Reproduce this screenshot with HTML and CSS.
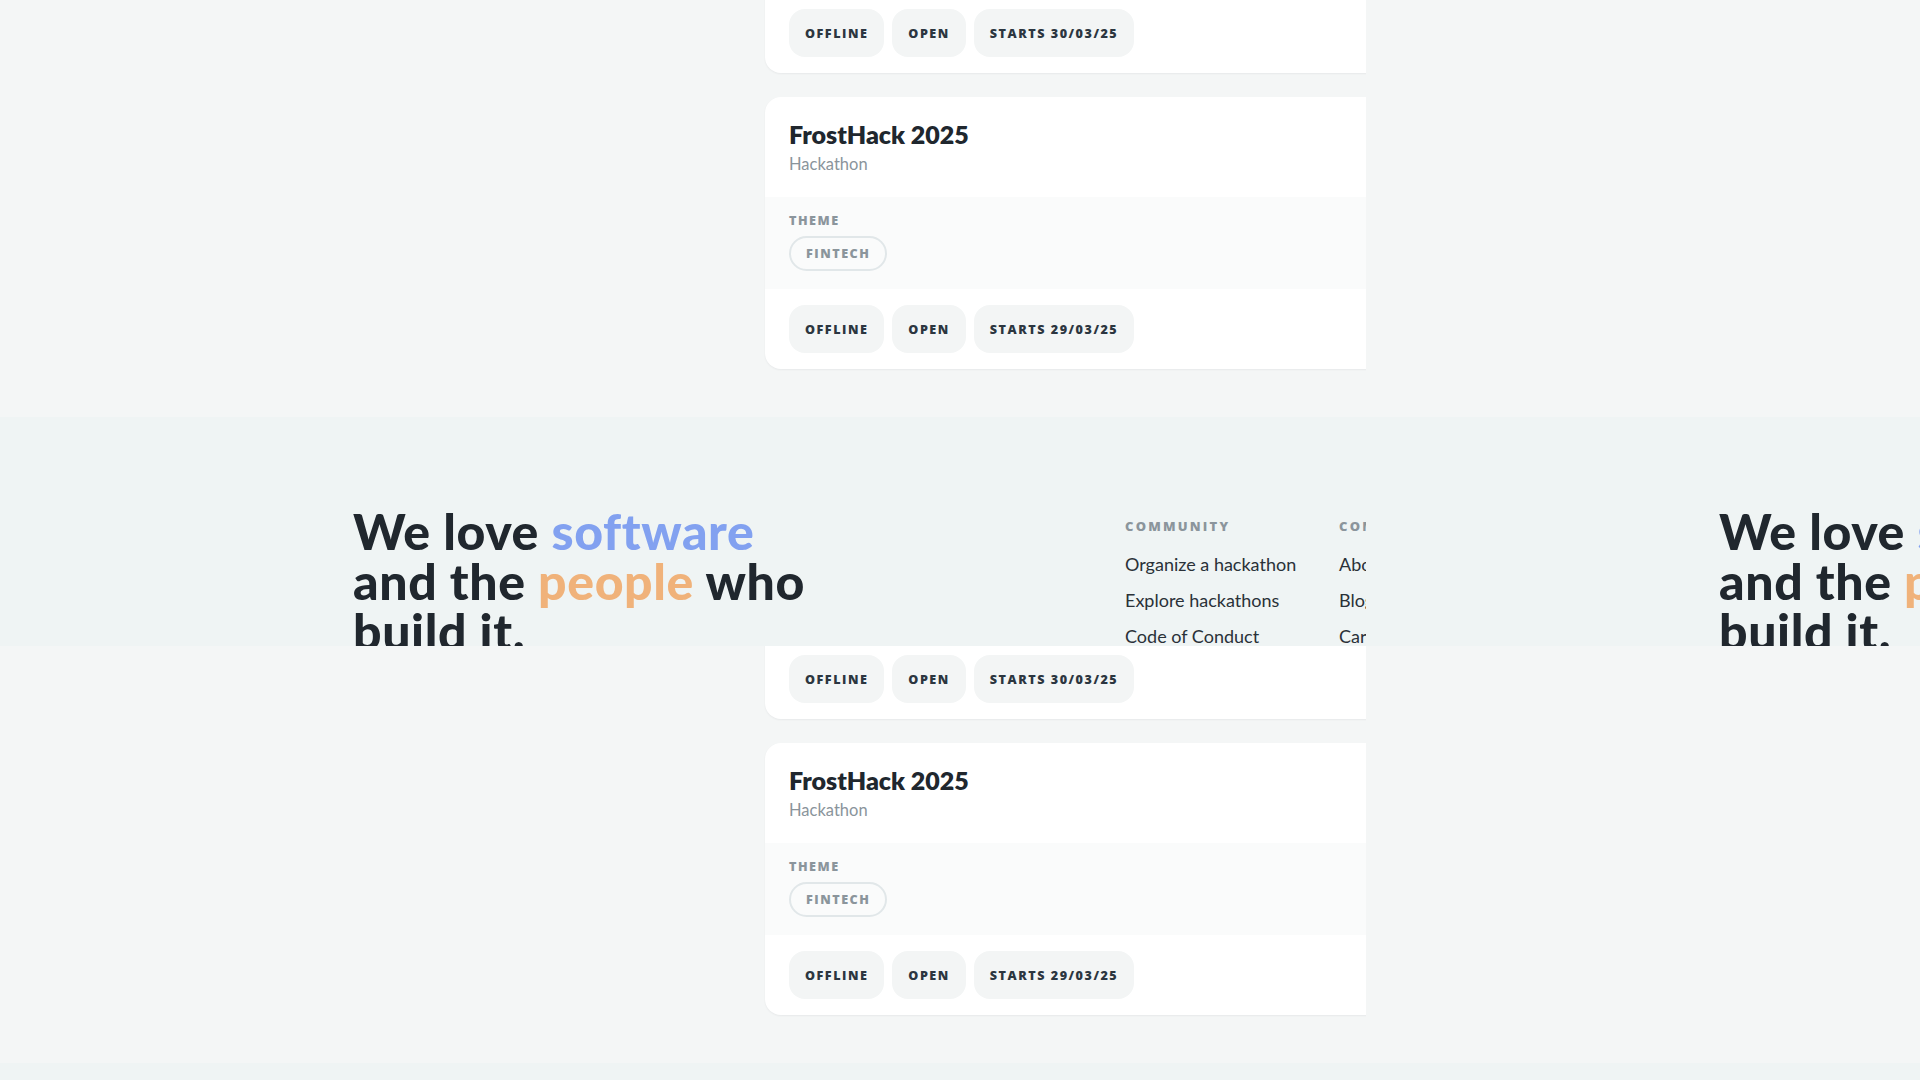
FILE: index.html
```html
<!DOCTYPE html>
<html lang="en">
<head>
<meta charset="utf-8">
<title>Hackathons</title>
<link rel="stylesheet" href="styles.css">
</head>
<body>
<div class="screen">
  <section class="tile">
    <div class="feed">
      <article class="card">
        <div class="card-head"><h3 class="card-title">IceHack 2025</h3><p class="card-sub">Hackathon</p></div>
        <div class="card-theme"><span class="label">Theme</span><div class="pills"><span class="pill">Fintech</span></div></div>
        <div class="chips"><span class="chip">Offline</span><span class="chip">Open</span><span class="chip">Starts 30/03/25</span></div>
      </article>
      <article class="card">
        <div class="card-head"><h3 class="card-title">FrostHack 2025</h3><p class="card-sub">Hackathon</p></div>
        <div class="card-theme"><span class="label">Theme</span><div class="pills"><span class="pill">Fintech</span></div></div>
        <div class="chips"><span class="chip">Offline</span><span class="chip">Open</span><span class="chip">Starts 29/03/25</span></div>
      </article>
    </div>
    <footer class="footer">
      <h2 class="slogan">We love <span class="blue">software</span><br>and the <span class="orange">people</span> who<br>build it.</h2>
      <nav class="cols">
        <div class="col"><h4 class="col-title">Community</h4><a class="link">Organize a hackathon</a><a class="link">Explore hackathons</a><a class="link">Code of Conduct</a></div>
        <div class="col"><h4 class="col-title">Company</h4><a class="link">About</a><a class="link">Blog</a><a class="link">Careers</a></div>
      </nav>
    </footer>
  </section>
  <section class="tile">
    <div class="feed">
      <article class="card">
        <div class="card-head"><h3 class="card-title">IceHack 2025</h3><p class="card-sub">Hackathon</p></div>
        <div class="card-theme"><span class="label">Theme</span><div class="pills"><span class="pill">Fintech</span></div></div>
        <div class="chips"><span class="chip">Offline</span><span class="chip">Open</span><span class="chip">Starts 30/03/25</span></div>
      </article>
      <article class="card">
        <div class="card-head"><h3 class="card-title">FrostHack 2025</h3><p class="card-sub">Hackathon</p></div>
        <div class="card-theme"><span class="label">Theme</span><div class="pills"><span class="pill">Fintech</span></div></div>
        <div class="chips"><span class="chip">Offline</span><span class="chip">Open</span><span class="chip">Starts 29/03/25</span></div>
      </article>
    </div>
    <footer class="footer">
      <h2 class="slogan">We love <span class="blue">software</span><br>and the <span class="orange">people</span> who<br>build it.</h2>
      <nav class="cols">
        <div class="col"><h4 class="col-title">Community</h4><a class="link">Organize a hackathon</a><a class="link">Explore hackathons</a><a class="link">Code of Conduct</a></div>
        <div class="col"><h4 class="col-title">Company</h4><a class="link">About</a><a class="link">Blog</a><a class="link">Careers</a></div>
      </nav>
    </footer>
  </section>
  <section class="tile">
    <div class="feed">
      <article class="card">
        <div class="card-head"><h3 class="card-title">IceHack 2025</h3><p class="card-sub">Hackathon</p></div>
        <div class="card-theme"><span class="label">Theme</span><div class="pills"><span class="pill">Fintech</span></div></div>
        <div class="chips"><span class="chip">Offline</span><span class="chip">Open</span><span class="chip">Starts 30/03/25</span></div>
      </article>
      <article class="card">
        <div class="card-head"><h3 class="card-title">FrostHack 2025</h3><p class="card-sub">Hackathon</p></div>
        <div class="card-theme"><span class="label">Theme</span><div class="pills"><span class="pill">Fintech</span></div></div>
        <div class="chips"><span class="chip">Offline</span><span class="chip">Open</span><span class="chip">Starts 29/03/25</span></div>
      </article>
    </div>
    <footer class="footer">
      <h2 class="slogan">We love <span class="blue">software</span><br>and the <span class="orange">people</span> who<br>build it.</h2>
      <nav class="cols">
        <div class="col"><h4 class="col-title">Community</h4><a class="link">Organize a hackathon</a><a class="link">Explore hackathons</a><a class="link">Code of Conduct</a></div>
        <div class="col"><h4 class="col-title">Company</h4><a class="link">About</a><a class="link">Blog</a><a class="link">Careers</a></div>
      </nav>
    </footer>
  </section>
  <section class="tile">
    <div class="feed">
      <article class="card">
        <div class="card-head"><h3 class="card-title">IceHack 2025</h3><p class="card-sub">Hackathon</p></div>
        <div class="card-theme"><span class="label">Theme</span><div class="pills"><span class="pill">Fintech</span></div></div>
        <div class="chips"><span class="chip">Offline</span><span class="chip">Open</span><span class="chip">Starts 30/03/25</span></div>
      </article>
      <article class="card">
        <div class="card-head"><h3 class="card-title">FrostHack 2025</h3><p class="card-sub">Hackathon</p></div>
        <div class="card-theme"><span class="label">Theme</span><div class="pills"><span class="pill">Fintech</span></div></div>
        <div class="chips"><span class="chip">Offline</span><span class="chip">Open</span><span class="chip">Starts 29/03/25</span></div>
      </article>
    </div>
    <footer class="footer">
      <h2 class="slogan">We love <span class="blue">software</span><br>and the <span class="orange">people</span> who<br>build it.</h2>
      <nav class="cols">
        <div class="col"><h4 class="col-title">Community</h4><a class="link">Organize a hackathon</a><a class="link">Explore hackathons</a><a class="link">Code of Conduct</a></div>
        <div class="col"><h4 class="col-title">Company</h4><a class="link">About</a><a class="link">Blog</a><a class="link">Careers</a></div>
      </nav>
    </footer>
  </section>
</div>
</body>
</html>
```

FILE: styles.css
```css
* { box-sizing: border-box; }
html, body { margin: 0; padding: 0; }
body {
  background: #f4f6f6;
  font-family: "Lato", "Noto Sans", sans-serif;
  color: #20272e;
}
.screen {
  width: 1920px;
  height: 1080px;
  overflow: hidden;
  display: grid;
  grid-template-columns: 1366px 1366px;
  grid-template-rows: 646px 646px;
}
.tile {
  width: 1366px;
  height: 646px;
  overflow: hidden;
  background: #f4f6f6;
  display: flex;
  flex-direction: column;
}
.feed {
  display: flex;
  flex-direction: column;
  gap: 24px;
  margin: -199px 0 0 765px;
  width: 640px;
  flex-shrink: 0;
}
.card {
  background: #ffffff;
  border-radius: 16px;
  box-shadow: 0 1px 2px rgba(30, 40, 50, 0.06);
  overflow: hidden;
  height: 272px;
  display: flex;
  flex-direction: column;
}
.card-head {
  padding: 21px 24px 0;
  height: 100px;
}
.card-title {
  margin: 0;
  font-size: 25px;
  line-height: 32px;
  font-weight: 800;
  color: #20272e;
}
.card-sub {
  margin: 4px 0 0;
  font-size: 16.5px;
  line-height: 20px;
  color: #8a949b;
}
.card-theme {
  background: #fafbfb;
  padding: 15px 24px 16px;
  height: 92px;
  display: flex;
  flex-direction: column;
  gap: 6px;
}
.label {
  font-family: "Open Sans", "Lato", sans-serif;
  font-size: 12.6px;
  line-height: 18px;
  font-weight: 800;
  letter-spacing: 0.12em;
  text-transform: uppercase;
  color: #8b959c;
}
.pills { display: flex; gap: 8px; }
.pill {
  height: 35px;
  padding: 0 15px;
  border: 2px solid #e1e7e9;
  border-radius: 18px;
  display: flex;
  align-items: center;
  font-family: "Open Sans", "Lato", sans-serif;
  font-size: 12.6px;
  font-weight: 800;
  letter-spacing: 0.12em;
  text-transform: uppercase;
  color: #8b959c;
}
.chips {
  display: flex;
  gap: 8px;
  padding: 16px 24px;
}
.chip {
  height: 48px;
  padding: 0 16px;
  border-radius: 16px;
  background: #f3f5f5;
  display: flex;
  align-items: center;
  font-family: "Open Sans", "Lato", sans-serif;
  font-size: 12.6px;
  font-weight: 800;
  letter-spacing: 0.12em;
  text-transform: uppercase;
  color: #2c3640;
}
.footer {
  margin-top: 48px;
  flex-shrink: 0;
  background: #eff4f4;
  display: flex;
  padding: 89px 0 80px 353px;
}
.slogan {
  margin: 0;
  width: 772px;
  flex-shrink: 0;
  font-size: 50px;
  line-height: 50px;
  font-weight: 900;
  color: #20272e;
  letter-spacing: 0.012em;
}
.blue { color: #82a1f0; }
.orange { color: #f0b27a; }
.cols { display: flex; }
.col {
  width: 214px;
  flex-shrink: 0;
  display: flex;
  flex-direction: column;
  padding-top: 10px;
}
.col-title {
  margin: 0 0 10px;
  font-family: "Open Sans", "Lato", sans-serif;
  font-size: 13px;
  line-height: 20px;
  font-weight: 800;
  letter-spacing: 0.17em;
  text-transform: uppercase;
  color: #8b959c;
}
.link {
  font-size: 18px;
  line-height: 36px;
  color: #2a3138;
}
```
